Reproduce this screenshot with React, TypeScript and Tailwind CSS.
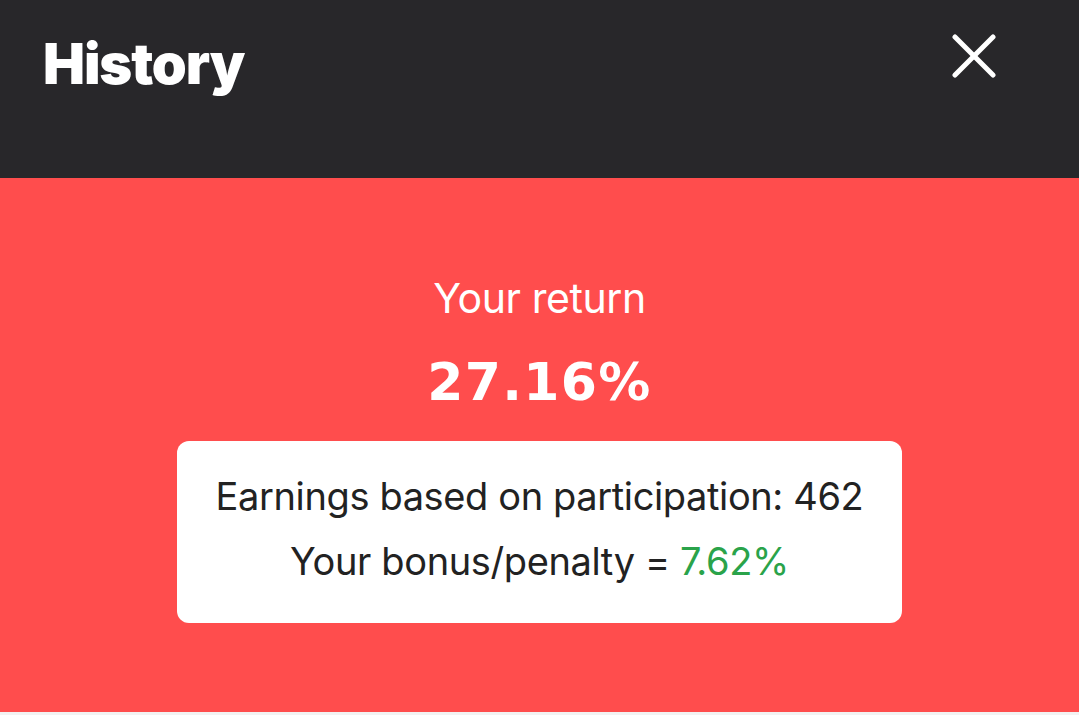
const sans = "font-['Inter','Noto_Sans',sans-serif]";

function CloseIcon() {
  return (
    <svg width="44" height="44" viewBox="0 0 44 44" fill="none" stroke="currentColor" strokeWidth="5" strokeLinecap="round">
      <path d="M3 3 L41 41" />
      <path d="M41 3 L3 41" />
    </svg>
  );
}

function Header() {
  return (
    <header className="flex h-[178px] items-start justify-between bg-[#28272a] pl-[43px] pr-[83px] pt-[30px]">
      <h1 className="pt-[6px] text-[56px] font-black leading-none tracking-[-0.02em] text-white">
        History
      </h1>
      <button className="mt-[4px] text-white">
        <CloseIcon />
      </button>
    </header>
  );
}

function ReturnSummary() {
  return (
    <section className="flex h-[534px] flex-col items-center bg-[#ff4d4d] pt-[100px]">
      <p className="text-[41px] leading-none tracking-[-0.01em] text-white">Your return</p>
      <p className="mt-[37px] font-['DejaVu_Sans',sans-serif] text-[52px] font-bold leading-none tracking-[0.025em] text-white">
        27.16%
      </p>
      <div className="mt-[33px] flex h-[182px] w-[725px] flex-col items-center justify-center gap-[27px] rounded-xl bg-white pb-[8px] text-[#222222]">
        <p className="text-[38px] leading-none tracking-[-0.01em]">Earnings based on participation: 462</p>
        <p className="text-[38px] leading-none tracking-[-0.01em]">
          Your bonus/penalty = <span className="text-[#2aa34a]">7.62%</span>
        </p>
      </div>
    </section>
  );
}

export default function App() {
  return (
    <div className={`${sans} h-[715px] w-[1079px] overflow-hidden bg-[#f2f2f2]`}>
      <Header />
      <ReturnSummary />
    </div>
  );
}
